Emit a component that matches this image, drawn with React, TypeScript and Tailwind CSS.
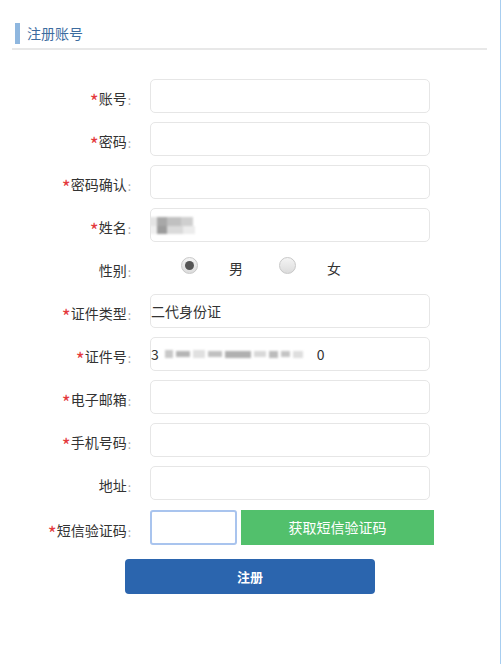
import React from "react";

const font = { fontFamily: '"Noto Sans CJK SC", "Liberation Sans", sans-serif' };

function Label({ text, req }: { text: string; req?: boolean }) {
  return (
    <div className="w-[131px] shrink-0 flex justify-end items-center text-[14px] text-[#333] pt-[5px]">
      {req && <span className="text-[#e4393c] text-[19px] leading-none self-start mt-[4px]">*</span>}
      <span>{text}</span>
      <span className="text-[#aaa] text-[12px] ml-[1px] mt-[3px]">:</span>
    </div>
  );
}

function Input({ children }: { children?: React.ReactNode }) {
  return (
    <div className="w-[280px] h-[34px] border border-[#e6e6e6] rounded-[5px] bg-white flex items-center text-[14px] text-[#333] overflow-hidden">
      {children}
    </div>
  );
}

function Row({ label, req, children }: { label: string; req?: boolean; children?: React.ReactNode }) {
  return (
    <div className="flex items-center h-[34px] gap-[19px]">
      <Label text={label} req={req} />
      {children ?? <Input />}
    </div>
  );
}

function Radio({ checked }: { checked?: boolean }) {
  return (
    <div className="w-[17px] h-[17px] rounded-full border border-[#c8c8c8] bg-gradient-to-b from-[#f4f4f4] to-[#dcdcdc] flex items-center justify-center shrink-0">
      {checked && <div className="w-[9px] h-[9px] rounded-full bg-[#555]" />}
    </div>
  );
}

export default function App() {
  return (
    <div style={font} className="w-[501px] h-[664px] bg-white border-r border-[#a8cef0] relative">
      <div className="pt-[23px] pl-[12px]">
        <div className="flex items-center h-[21px]">
          <div className="w-[5px] h-[21px] bg-[#8fb7df] ml-[3px]" />
          <span className="ml-[7px] text-[14px] text-[#3d6c9f]">注册账号</span>
        </div>
        <div className="mt-[4px] w-[475px] h-[2px] bg-[#e8e8e8]" />
      </div>

      <div className="mt-[29px] flex flex-col gap-[9px]">
        <Row label="账号" req />
        <Row label="密码" req />
        <Row label="密码确认" req />
        <Row label="姓名" req>
          <Input>
            <div className="flex flex-col -ml-[2px] blur-[1.2px]">
              <div className="flex">
                <div className="w-[8px] h-[9px] bg-[#e4e4e4]" />
                <div className="w-[10px] h-[9px] bg-[#a8a8a8]" />
                <div className="w-[14px] h-[9px] bg-[#c0c0c0]" />
                <div className="w-[12px] h-[9px] bg-[#cfcfcf]" />
              </div>
              <div className="flex">
                <div className="w-[8px] h-[8px] bg-[#f0f0f0]" />
                <div className="w-[10px] h-[8px] bg-[#9c9c9c]" />
                <div className="w-[16px] h-[8px] bg-[#dadada]" />
                <div className="w-[12px] h-[8px] bg-[#ececec]" />
              </div>
            </div>
          </Input>
        </Row>
        <div className="flex items-center h-[34px] gap-[19px]">
          <Label text="性别" />
          <div className="flex items-center text-[14px] text-[#333] ml-[31px]">
            <div className="-mt-[6px]"><Radio checked /></div>
            <span className="ml-[31px]">男</span>
            <div className="ml-[36px] -mt-[6px]"><Radio /></div>
            <span className="ml-[31px]">女</span>
          </div>
        </div>
        <Row label="证件类型" req>
          <Input>
            <span>二代身份证</span>
          </Input>
        </Row>
        <Row label="证件号" req>
          <Input>
            <span>3</span>
            <div className="flex items-center gap-[3px] ml-[6px] blur-[1px]">
              <div className="w-[8px] h-[8px] bg-[#c8c8c8]" />
              <div className="w-[14px] h-[6px] bg-[#b5b5b5]" />
              <div className="w-[12px] h-[8px] bg-[#e0e0e0]" />
              <div className="w-[14px] h-[6px] bg-[#c0c0c0]" />
              <div className="w-[26px] h-[7px] bg-[#b0b0b0]" />
              <div className="w-[12px] h-[6px] bg-[#d8d8d8]" />
              <div className="w-[9px] h-[7px] bg-[#bcbcbc]" />
              <div className="w-[9px] h-[6px] bg-[#c4c4c4]" />
              <div className="w-[10px] h-[7px] bg-[#dedede]" />
            </div>
            <span className="ml-[14px]">0</span>
          </Input>
        </Row>
        <Row label="电子邮箱" req />
        <Row label="手机号码" req />
        <Row label="地址" />
        <div className="flex items-center h-[35px] gap-[19px] mt-[1px]">
          <Label text="短信验证码" req />
          <div className="flex items-center gap-[4px]">
            <div className="w-[87px] h-[35px] border-2 border-[#a9c4ee] rounded-[3px] bg-white" />
            <button className="w-[193px] h-[35px] bg-[#52c06c] text-white text-[14px]">获取短信验证码</button>
          </div>
        </div>
      </div>

      <button className="mt-[14px] ml-[125px] w-[250px] h-[35px] rounded-[4px] bg-[#2b65ae] text-white text-[13px] font-bold">
        注册
      </button>
    </div>
  );
}
